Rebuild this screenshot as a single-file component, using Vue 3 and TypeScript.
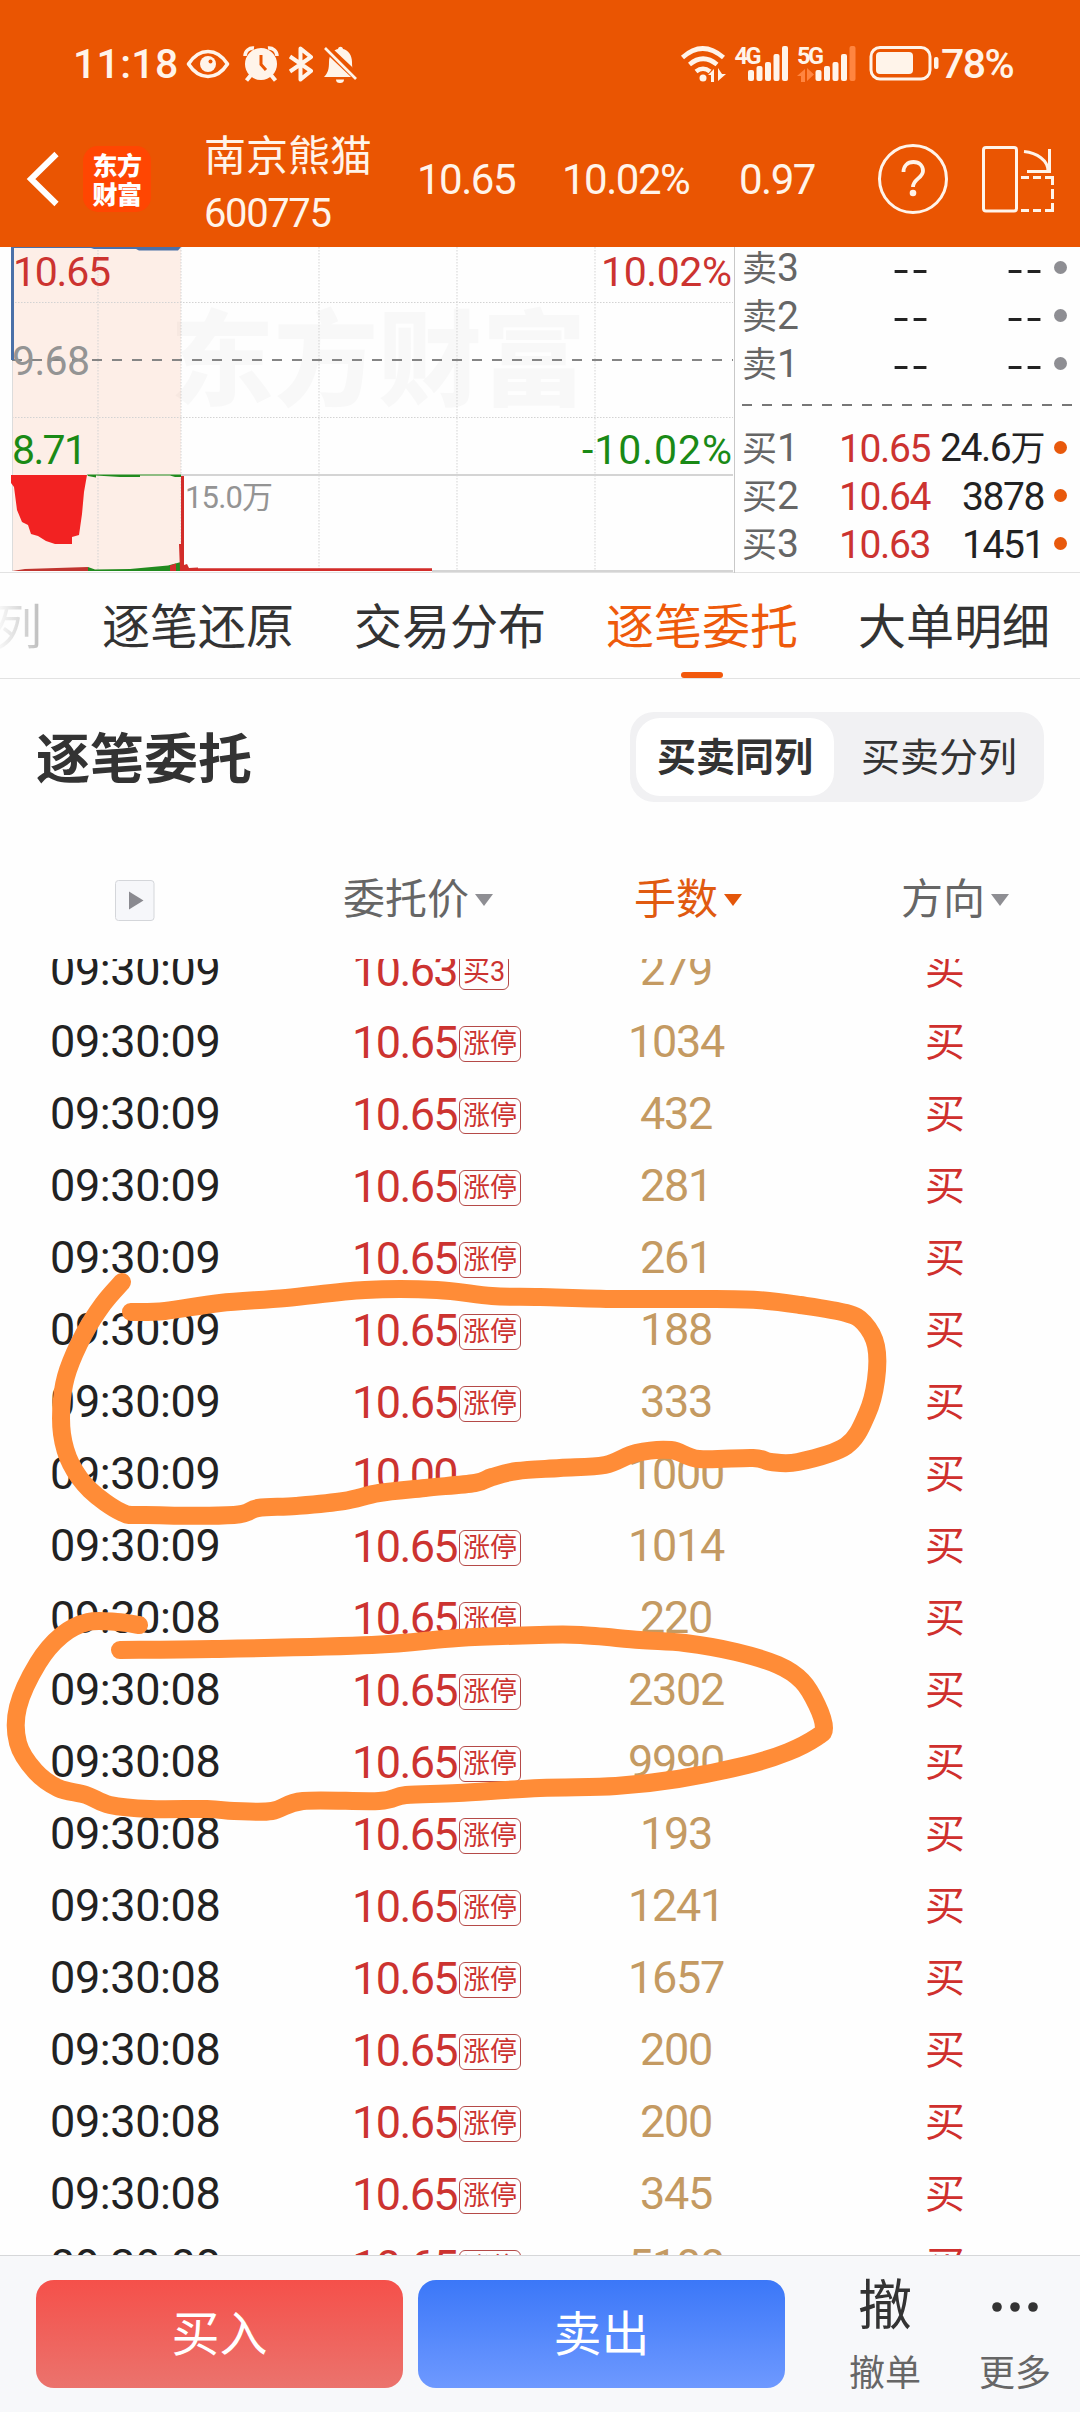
<script setup lang="ts">
interface OrderRow {
  time: string
  price: string
  tag: string
  volume: string
}

interface BookLevel {
  label: string
  level: number
  price: string
  volume: string
  unit?: string
}

type Point = [number, number]

const asks: BookLevel[] = [
  { label: '卖', level: 3, price: '--', volume: '--' },
  { label: '卖', level: 2, price: '--', volume: '--' },
  { label: '卖', level: 1, price: '--', volume: '--' },
]

const bids: BookLevel[] = [
  { label: '买', level: 1, price: '10.65', volume: '24.6', unit: '万' },
  { label: '买', level: 2, price: '10.64', volume: '3878' },
  { label: '买', level: 3, price: '10.63', volume: '1451' },
]

const tabs = ['列', '逐笔还原', '交易分布', '逐笔委托', '大单明细']
const activeTab = '逐笔委托'

const row = (time: string, volume: string, price = '10.65', tag = '涨停'): OrderRow => ({
  time,
  price,
  tag,
  volume,
})

const rows: OrderRow[] = [
  row('09:30:09', '279', '10.63', '买3'),
  row('09:30:09', '1034'),
  row('09:30:09', '432'),
  row('09:30:09', '281'),
  row('09:30:09', '261'),
  row('09:30:09', '188'),
  row('09:30:09', '333'),
  row('09:30:09', '1000', '10.00', ''),
  row('09:30:09', '1014'),
  row('09:30:08', '220'),
  row('09:30:08', '2302'),
  row('09:30:08', '9990'),
  row('09:30:08', '193'),
  row('09:30:08', '1241'),
  row('09:30:08', '1657'),
  row('09:30:08', '200'),
  row('09:30:08', '200'),
  row('09:30:08', '345'),
  row('09:30:08', '5100'),
]

// Freehand marker strokes, smoothed with a Catmull-Rom spline.
const strokeA: Point[] = [
  [122, 1282], [103, 1304], [84, 1334], [68, 1370], [62, 1399], [62, 1434], [71, 1464],
  [90, 1490], [121, 1512], [145, 1515], [234, 1515], [258, 1508], [296, 1506], [344, 1501], [379, 1493],
  [425, 1488], [475, 1483], [492, 1477], [517, 1471], [560, 1468], [605, 1465], [636, 1453],
  [671, 1450], [699, 1459], [753, 1458], [771, 1462], [798, 1462], [846, 1446], [867, 1414],
  [876, 1380], [876, 1346], [864, 1323], [846, 1313], [800, 1305], [757, 1300], [700, 1299],
  [616, 1299], [540, 1297], [492, 1296], [437, 1290], [365, 1290], [286, 1298], [220, 1303],
  [165, 1311], [131, 1312],
]

const strokeB: Point[] = [
  [139, 1625], [117, 1622], [88, 1622], [62, 1635], [38, 1663], [18, 1707], [18, 1743],
  [35, 1771], [58, 1788], [86, 1795], [110, 1805], [150, 1809], [207, 1809], [234, 1811],
  [272, 1811], [303, 1801], [379, 1801], [406, 1795], [458, 1793], [540, 1788], [616, 1786],
  [678, 1779], [747, 1765], [788, 1752], [817, 1737], [824, 1728], [817, 1705], [802, 1681],
  [778, 1665], [736, 1652], [685, 1643], [640, 1640], [581, 1635], [540, 1635], [458, 1638],
  [372, 1645], [213, 1649], [120, 1650],
]

function smooth(pts: Point[]): string {
  const at = (i: number): Point => pts[Math.max(0, Math.min(pts.length - 1, i))]
  let d = `M${pts[0][0]} ${pts[0][1]}`
  for (let i = 0; i < pts.length - 1; i++) {
    const [p0, p1, p2, p3] = [at(i - 1), at(i), at(i + 1), at(i + 2)]
    const c1 = [p1[0] + (p2[0] - p0[0]) / 6, p1[1] + (p2[1] - p0[1]) / 6]
    const c2 = [p2[0] - (p3[0] - p1[0]) / 6, p2[1] - (p3[1] - p1[1]) / 6]
    d += ` C${c1[0].toFixed(1)} ${c1[1].toFixed(1)} ${c2[0].toFixed(1)} ${c2[1].toFixed(1)} ${p2[0]} ${p2[1]}`
  }
  return d
}

const markerPaths = [smooth(strokeA), smooth(strokeB)]
const gridX = [98, 181, 319, 457, 595]
</script>

<template>
  <div class="screen">
    <header class="top">
      <div class="status">
        <span class="clock">11:18</span>
        <svg class="i-eye" width="44" height="30" viewBox="0 0 44 30">
          <path d="M2.5 15C8 6.500 14.500 2.500 22 2.500S36 6.500 41.500 15C36 23.500 29.500 27.500 22 27.500S8 23.500 2.500 15Z" fill="none" stroke="#fff4ea" stroke-width="3.600" stroke-linejoin="round" />
          <circle cx="22" cy="15" r="8" fill="#fff4ea" />
          <circle cx="24.500" cy="12.500" r="2" fill="#ea5502" />
        </svg>
        <svg class="i-alarm" width="36" height="36" viewBox="0 0 36 36">
          <path d="M2 10a8 8 0 0 1 9-8M34 10a8 8 0 0 0-9-8" fill="none" stroke="#fff4ea" stroke-width="3.500" />
          <path d="M8 29l-4.500 5.500M28 29l4.500 5.500" stroke="#fff4ea" stroke-width="4" />
          <circle cx="18" cy="18" r="16" fill="#fff4ea" />
          <path d="M18 9v9.500l5 5.500" fill="none" stroke="#ea5502" stroke-width="3" />
        </svg>
        <svg class="i-bt" width="26" height="36" viewBox="0 0 26 36">
          <path d="M2 10.500L23 25 12.500 33.500V2.500L23 11 2 25.500" fill="none" stroke="#fff4ea" stroke-width="4" stroke-linejoin="round" />
        </svg>
        <svg class="i-bell" width="36" height="38" viewBox="0 0 36 38">
          <path d="M1 32c4-4 5-8 5-15 0-7 4-12 9-13 .5-3 4.500-3 5 0 5 1 9 6 9 13 0 7 1 10 3 12l-2 3Z" fill="#fff4ea" />
          <path d="M0 0l36 34" stroke="#ea5502" stroke-width="8" />
          <path d="M2 3l31 31" stroke="#fff4ea" stroke-width="2.600" />
          <path d="M13 34.500h8a4 3.500 0 0 1-8 0Z" fill="#fff4ea" />
        </svg>
        <svg class="i-net" width="260" height="38" viewBox="680 44 260 38">
          <g fill="none" stroke="#fff4ea" stroke-width="4.600">
            <path d="M682.500 56.500q20-18 41 0" />
            <path d="M689.500 63.500q13.500-11.500 27.500 0" />
            <path d="M696 70.500q7-5.500 14 0" />
          </g>
          <circle cx="703" cy="77" r="3.500" fill="#fff4ea" />
          <path d="M708 74l6-6v13h-3v-7ZM718 67v13l8-7h-4Z" fill="#fff4ea" />
          <text x="734.500" y="62.500" class="gen">4G</text>
          <g fill="#fff4ea">
            <rect x="748" y="69" width="6" height="11" rx="2" />
            <rect x="756.500" y="65" width="6" height="15" rx="2" />
            <rect x="765" y="61" width="6" height="19" rx="2" />
            <rect x="773.500" y="53" width="6" height="27" rx="2" />
            <rect x="782" y="45" width="6" height="35" rx="2" />
            <rect x="815.500" y="69" width="6" height="11" rx="2" />
            <rect x="824" y="65" width="6" height="15" rx="2" />
            <rect x="832.500" y="61" width="6" height="19" rx="2" />
            <rect x="841" y="53" width="6" height="27" rx="2" />
          </g>
          <text x="797" y="62.500" class="gen">5G</text>
          <g fill="#ff8540">
            <rect x="849.500" y="45" width="6" height="35" rx="2" />
            <path d="M797 75l8-7v13h-4v-6ZM807 67v13l7-6.500Z" />
          </g>
          <rect x="871" y="46.500" width="59" height="31.500" rx="9" fill="none" stroke="#fff4ea" stroke-width="3" />
          <rect x="876" y="51" width="37" height="22" rx="4" fill="#fff4ea" />
          <rect x="934" y="56" width="4.500" height="12" rx="2" fill="#fff4ea" />
        </svg>
        <span class="battery">78%</span>
      </div>

      <div class="quote">
        <svg class="back" width="36" height="60" viewBox="0 0 36 60">
          <path d="M32.500 5L7 30 32.500 55" fill="none" stroke="#fff" stroke-width="6" />
        </svg>
        <div class="logo"><span>东方</span><span>财富</span></div>
        <div class="stock">
          <span class="name">南京熊猫</span>
          <span class="code">600775</span>
        </div>
        <span class="num q1">10.65</span>
        <span class="num q2">10.02%</span>
        <span class="num q3">0.97</span>
        <svg class="help" width="72" height="72" viewBox="0 0 72 72">
          <circle cx="36" cy="36" r="33.500" fill="none" stroke="#fff4ea" stroke-width="3" />
          <path d="M26.500 29c0-6 4-10 10-10s9.500 4 9.500 9c0 7-10 8-10 16" fill="none" stroke="#fff4ea" stroke-width="3.800" />
          <circle cx="36" cy="50" r="3.300" fill="#fff4ea" />
        </svg>
        <svg class="rotate" width="76" height="70" viewBox="0 0 76 70">
          <g fill="none" stroke="#fff4ea" stroke-width="3">
            <rect x="3.500" y="3.500" width="33" height="63.500" rx="2.500" />
            <path d="M44 7.500C57 9 68 16 68 27M69.500 5v22.500H47" />
            <path d="M41 33.500h8M53 33.500h8M65 33.500h8M72.500 32v9M72.500 45v10M72.500 59v9M41 66.500h8M53 66.500h8M65 66.500h8" />
          </g>
        </svg>
      </div>
    </header>

    <section class="market">
      <svg class="chart" width="736" height="326" viewBox="0 247 736 326">
        <rect x="12" y="247" width="169" height="324" fill="#fdeee7" />
        <text x="170" y="398" class="mark">东方财富</text>
        <g stroke="#d3d3d3" stroke-width="1" stroke-dasharray="1.500 1.500">
          <path v-for="x in gridX" :key="x" :d="`M${x} 247V571`" />
          <path d="M12 302.500H733M12 417.500H733" />
        </g>
        <path d="M12.500 247V571" stroke="#dcdcdc" />
        <path d="M12 360H733" stroke="#858585" stroke-width="2" stroke-dasharray="10 10" />
        <path d="M181 475H733M432 571H733" stroke="#d4d4d4" stroke-width="2.200" />
        <path d="M734.500 247V573" stroke="#c8c8c8" />
        <path d="M11 247H181L178 250.500H139L136 249H94L91 248H14V360H11Z" fill="#4a70a8" />
        <path d="M11 475H87L84 492 82 514 79 535 72 537V544H55L46 541 38 536 31 534 28 525 22 522 17 510 14 487 11 483Z" fill="#f22222" />
        <path d="M87 474.500H181V477H175L170 475.500H140V477H120L96 475.500V477.500L88 476Z" fill="#218a1e" />
        <path d="M12 571L25 569 88 567V571Z" fill="#c0342f" />
        <path d="M88 567L95 569.500 130 569 168 565.500 181 562V571H88Z" fill="#218a1e" />
        <path d="M170 565.500L176 563.500V571H170ZM179 544H181V476H184V565L187 564 189 568 198 567.500V568.200H432V571H180Z" fill="#d22d2a" />
        <g class="axis">
          <text x="13" y="286" fill="#cc3330" textLength="98">10.65</text>
          <text x="12" y="375" fill="#949494" textLength="78">9.68</text>
          <text x="12" y="464" fill="#1a8a16" textLength="75">8.71</text>
          <text x="601" y="286" fill="#cc3330" textLength="131">10.02%</text>
          <text x="582" y="464" fill="#1a8a16" textLength="150">-10.02%</text>
          <text x="185" y="507.500" class="vol" fill="#949494" textLength="88">15.0万</text>
        </g>
      </svg>
      <div class="book">
        <div v-for="b in asks" :key="'s' + b.level" class="level">
          <span class="lab">{{ b.label }}<i>{{ b.level }}</i></span>
          <span class="none">{{ b.price }}</span>
          <span class="none">{{ b.volume }}</span>
          <b class="dot"></b>
        </div>
        <svg class="sep" width="332" height="36" viewBox="0 0 332 36">
          <path d="M0 13H332" stroke="#777" stroke-width="2" stroke-dasharray="10 10" />
        </svg>
        <div v-for="b in bids" :key="'b' + b.level" class="level">
          <span class="lab">{{ b.label }}<i>{{ b.level }}</i></span>
          <span class="bid">{{ b.price }}</span>
          <span class="qty">{{ b.volume }}<em v-if="b.unit">{{ b.unit }}</em></span>
          <b class="dot hot"></b>
        </div>
      </div>
    </section>

    <nav class="tabs">
      <span v-for="t in tabs" :key="t" class="tab" :class="{ on: t === activeTab, fade: t === tabs[0] }">{{ t }}</span>
    </nav>

    <div class="title">
      <h2>逐笔委托</h2>
      <div class="segment">
        <span class="seg on">买卖同列</span>
        <span class="seg">买卖分列</span>
      </div>
    </div>

    <div class="cols">
      <span class="play">
        <svg width="40" height="41" viewBox="0 0 40 41">
          <rect x="0.500" y="0.500" width="38.500" height="40" rx="3" fill="#f6f7fa" stroke="#d4d6da" />
          <path d="M14 11.500L28.500 20.500 14 29.500Z" fill="#8a8a90" />
        </svg>
      </span>
      <span class="col">委托价<u></u></span>
      <span class="col hot">手数<u></u></span>
      <span class="col">方向<u></u></span>
    </div>

    <main class="list">
      <div v-for="(r, i) in rows" :key="i" class="row">
        <span class="time">{{ r.time }}</span>
        <span class="price">{{ r.price }}<em v-if="r.tag">{{ r.tag }}</em></span>
        <span class="volume">{{ r.volume }}</span>
        <span class="side">买</span>
      </div>
    </main>

    <footer class="bar">
      <button class="btn buy">买入</button>
      <button class="btn sell">卖出</button>
      <div class="act cancel"><span class="glyph">撤</span><span class="cap">撤单</span></div>
      <div class="act more">
        <span class="glyph">
          <svg width="48" height="12" viewBox="0 0 48 12" fill="#333">
            <circle cx="6" cy="6" r="4.800" /><circle cx="24" cy="6" r="4.800" /><circle cx="42" cy="6" r="4.800" />
          </svg>
        </span>
        <span class="cap">更多</span>
      </div>
    </footer>

    <svg class="marker" width="1080" height="2412" viewBox="0 0 1080 2412">
      <path v-for="(d, i) in markerPaths" :key="i" :d="d" />
    </svg>
  </div>
</template>

<style>
body {
  margin: 0;
  background: #fefefe;
}
</style>

<style scoped>
.screen {
  position: relative;
  width: 1080px;
  height: 2412px;
  overflow: hidden;
  display: flex;
  flex-direction: column;
  background: #fefefe;
  color: #333;
  font-family: Roboto, 'Noto Sans CJK SC', sans-serif;
}
svg {
  display: block;
  flex: none;
}
.top {
  height: 247px;
  flex: none;
  background: #ea5502;
  color: #fff4ea;
}
.status {
  display: flex;
  align-items: center;
  height: 127px;
  padding-left: 73px;
}
.clock {
  width: 112px;
  font-size: 41px;
  font-weight: 500;
  line-height: 48px;
  letter-spacing: 0.3px;
  white-space: nowrap;
}
.i-eye {
  margin-left: 1px;
}
.i-alarm {
  margin-left: 13px;
}
.i-bt {
  margin-left: 9px;
}
.i-bell {
  margin-left: 9px;
}
.i-net {
  margin-left: 321px;
  overflow: visible;
}
.gen {
  font-size: 23.5px;
  font-weight: 700;
  fill: #fff4ea;
  letter-spacing: -2.5px;
}
.battery {
  margin-left: 1px;
  font-size: 41px;
  font-weight: 500;
  line-height: 48px;
  letter-spacing: -1.5px;
}
.quote {
  display: flex;
  align-items: center;
  height: 104px;
  padding-left: 24px;
}
.logo {
  display: flex;
  flex-direction: column;
  align-items: center;
  justify-content: center;
  width: 68px;
  height: 66px;
  margin-left: 23px;
  border-radius: 15px;
  background: #ff4602;
  color: #fff;
  font: 900 25px/29px 'Noto Sans CJK SC', sans-serif;
  letter-spacing: -0.5px;
}
.stock {
  display: flex;
  flex-direction: column;
  width: 215px;
  margin-left: 53px;
  padding-top: 13px;
}
.name {
  font-size: 42px;
  line-height: 55px;
}
.code {
  margin-top: 2px;
  font-size: 40px;
  line-height: 56px;
  letter-spacing: -1.4px;
}
.num {
  font-size: 42px;
  line-height: 50px;
  letter-spacing: -1.5px;
  padding-top: 2px;
}
.q1 {
  width: 145px;
  margin-left: -2px;
}
.q2 {
  width: 177px;
}
.q3 {
  width: 138px;
}
.rotate {
  margin-left: 31px;
}
.market {
  display: flex;
  height: 325px;
  flex: none;
  border-bottom: 1px solid #e2e2e2;
}
.mark {
  font: 900 104px 'Noto Sans CJK SC', sans-serif;
  fill: #000;
  fill-opacity: 0.025;
}
.axis text {
  font-size: 41px;
}
.axis .vol {
  font-size: 31px;
}
.book {
  display: flex;
  flex-direction: column;
  width: 344px;
  padding-left: 6px;
}
.level {
  display: grid;
  grid-template-columns: 70px 118px 114px 30px;
  align-items: center;
  height: 48px;
}
.level:first-child {
  margin-top: -3px;
}
.level span {
  font-size: 39px;
  line-height: 48px;
  letter-spacing: -1.4px;
  white-space: nowrap;
}
.level .lab {
  font-size: 35px;
  color: #666;
  letter-spacing: 0;
}
.lab i {
  font-size: 39px;
  font-style: normal;
}
.level .bid {
  text-align: right;
  color: #cc3330;
}
.level .qty {
  text-align: right;
  color: #222;
}
.qty em {
  font-size: 35px;
  font-style: normal;
}
.level .none {
  font-family: 'DejaVu Sans', sans-serif;
  font-size: 38px;
  letter-spacing: 1px;
  text-align: right;
  transform: scaleX(1.28);
  transform-origin: 100% 50%;
  color: #222;
}
.dot {
  width: 13px;
  height: 13px;
  margin: -3px 0 0 10px;
  border-radius: 50%;
  background: #8e8e93;
}
.dot.hot {
  background: #e8590c;
}
.sep {
  margin: 4px 0 -4px 0;
}
.tabs {
  display: flex;
  gap: 60px;
  height: 105px;
  flex: none;
  margin-left: -6px;
  border-bottom: 1px solid #e2e2e2;
  font-size: 48px;
  line-height: 109px;
  white-space: nowrap;
}
.tab {
  position: relative;
  width: 192px;
  flex: none;
  color: #333;
}
.tab.on {
  color: #ee5a0b;
}
.tab.on::after {
  content: '';
  position: absolute;
  left: 75px;
  bottom: 0;
  width: 42px;
  height: 6px;
  border-radius: 3px;
  background: #f2590d;
}
.tab.fade {
  width: 48px;
  color: transparent;
  background: linear-gradient(90deg, #fff, #bbb);
  background-clip: text;
  -webkit-background-clip: text;
}
.title {
  display: flex;
  align-items: center;
  justify-content: space-between;
  height: 90px;
  flex: none;
  margin-top: 33px;
  padding: 0 36px;
}
h2 {
  margin: 8px 0 0;
  font-size: 54px;
  font-weight: 700;
  line-height: 90px;
}
.segment {
  display: flex;
  box-sizing: border-box;
  width: 414px;
  height: 90px;
  padding: 6px;
  border-radius: 24px;
  background: #f1f1f3;
}
.seg {
  width: 198px;
  height: 78px;
  border-radius: 24px;
  font-size: 39px;
  line-height: 81px;
  text-align: center;
}
.seg + .seg {
  padding-left: 6px;
}
.seg.on {
  background: #fff;
  font-weight: 700;
}
.cols {
  display: grid;
  grid-template-columns: 343px 291px 267px 179px;
  align-items: center;
  height: 60px;
  flex: none;
  margin-top: 67px;
}
.play {
  padding-left: 115px;
}
.col {
  display: flex;
  align-items: center;
  font-size: 42px;
  line-height: 62px;
  color: #666;
}
.col u {
  margin: 0 0 1px 6px;
  border: 9px solid transparent;
  border-top: 12px solid #8e8e93;
  border-bottom: 0;
}
.col.hot {
  color: #e05a10;
}
.col.hot u {
  border-top-color: #e4560a;
}
.list {
  height: 1296px;
  flex: none;
  margin-top: 30px;
  overflow: hidden;
}
.row {
  display: grid;
  grid-template-columns: 352px 190px 268px 270px;
  height: 72px;
  font-size: 45px;
  line-height: 72px;
  letter-spacing: -1.3px;
}
.row:first-child {
  margin-top: -25px;
}
.time {
  padding-left: 50px;
  color: #222;
  letter-spacing: -0.4px;
}
.price {
  display: flex;
  align-items: center;
  color: #cc3330;
  letter-spacing: -1.6px;
}
.price em {
  box-sizing: border-box;
  height: 36px;
  margin: 1px 0 0 2px;
  padding: 0 3px;
  border: 1px solid #b54a48;
  border-radius: 6px;
  font-size: 27px;
  font-style: normal;
  line-height: 34px;
  letter-spacing: 0;
}
.volume {
  text-align: center;
  color: #c49a62;
}
.side {
  text-align: center;
  font-size: 40px;
  letter-spacing: 0;
  line-height: 74px;
  color: #cf2f2d;
}
.bar {
  display: flex;
  flex: 1;
  box-sizing: border-box;
  border-top: 1px solid #d6d7d9;
  background: #f7f8fa;
  padding: 24px 0 0 36px;
}
.btn {
  width: 367px;
  height: 108px;
  margin: 0 15px 0 0;
  padding: 0;
  border: 0;
  border-radius: 18px;
  color: #fff;
  font: 48px/110px Roboto, 'Noto Sans CJK SC', sans-serif;
}
.buy {
  background: linear-gradient(#f5504a, #eb736d);
}
.sell {
  background: linear-gradient(#3b77f8, #6e99ff);
}
.act {
  display: flex;
  flex-direction: column;
  align-items: center;
  width: 130px;
}
.cancel {
  margin-left: 20px;
}
.glyph {
  display: flex;
  align-items: center;
  height: 54px;
  font-size: 54px;
  line-height: 56px;
}
.cap {
  margin-top: 19px;
  font-size: 36px;
  line-height: 42px;
  color: #666;
}
.marker {
  position: absolute;
  left: 0;
  top: 0;
  fill: none;
  stroke: #ff8c37;
  stroke-width: 18px;
  stroke-linecap: round;
  stroke-linejoin: round;
}
</style>
